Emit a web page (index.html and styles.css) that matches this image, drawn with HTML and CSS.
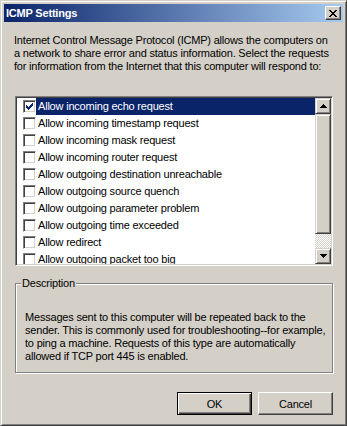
FILE: index.html
```html
<!DOCTYPE html>
<html>
<head>
<meta charset="utf-8">
<title>ICMP Settings</title>
<link rel="stylesheet" href="styles.css">
</head>
<body>
<div class="window">
  <div class="titlebar">
    <span class="title">ICMP Settings</span>
    <button class="close" aria-label="Close">
      <svg width="8" height="7" viewBox="0 0 8 7" shape-rendering="crispEdges">
        <path d="M0 0h2v1H0zM6 0h2v1H6zM1 1h2v1H1zM5 1h2v1H5zM2 2h4v1H2zM3 3h2v1H3zM2 4h4v1H2zM1 5h2v1H1zM5 5h2v1H5zM0 6h2v1H0zM6 6h2v1H6z" fill="#000"/>
      </svg>
    </button>
  </div>
  <div class="client">
    <p class="intro">Internet Control Message Protocol (ICMP) allows the computers on<br>a network to share error and status information. Select the requests<br>for information from the Internet that this computer will respond to:</p>
    <div class="listbox">
      <ul class="items">
        <li class="row selected"><span class="check checked"><svg width="7" height="7" viewBox="0 0 7 7" shape-rendering="crispEdges"><path d="M6 0h1v3H6zM5 1h1v3H5zM4 2h1v3H4zM3 3h1v3H3zM2 4h1v3H2zM1 3h1v3H1zM0 2h1v3H0z" fill="#0a246a"/></svg></span><span class="label">Allow incoming echo request</span></li>
        <li class="row"><span class="check"></span><span class="label">Allow incoming timestamp request</span></li>
        <li class="row"><span class="check"></span><span class="label">Allow incoming mask request</span></li>
        <li class="row"><span class="check"></span><span class="label">Allow incoming router request</span></li>
        <li class="row"><span class="check"></span><span class="label">Allow outgoing destination unreachable</span></li>
        <li class="row"><span class="check"></span><span class="label">Allow outgoing source quench</span></li>
        <li class="row"><span class="check"></span><span class="label">Allow outgoing parameter problem</span></li>
        <li class="row"><span class="check"></span><span class="label">Allow outgoing time exceeded</span></li>
        <li class="row"><span class="check"></span><span class="label">Allow redirect</span></li>
        <li class="row"><span class="check"></span><span class="label">Allow outgoing packet too big</span></li>
      </ul>
      <div class="scrollbar">
        <div class="sb-btn"><svg width="7" height="4" viewBox="0 0 7 4" shape-rendering="crispEdges"><path d="M3 0h1v1H3zM2 1h3v1H2zM1 2h5v1H1zM0 3h7v1H0z" fill="#000"/></svg></div>
        <div class="sb-thumb"></div>
        <div class="sb-track"></div>
        <div class="sb-btn"><svg width="7" height="4" viewBox="0 0 7 4" shape-rendering="crispEdges"><path d="M0 0h7v1H0zM1 1h5v1H1zM2 2h3v1H2zM3 3h1v1H3z" fill="#000"/></svg></div>
      </div>
    </div>
    <fieldset class="group">
      <legend class="group-label">Description</legend>
      <p class="desc">Messages sent to this computer will be repeated back to the<br>sender. This is commonly used for troubleshooting--for example,<br>to ping a machine. Requests of this type are automatically<br>allowed if TCP port 445 is enabled.</p>
    </fieldset>
    <div class="buttons">
      <button class="btn default">OK</button>
      <button class="btn">Cancel</button>
    </div>
  </div>
</div>
</body>
</html>
```
FILE: styles.css
```css
* { box-sizing: border-box; }

body {
  margin: 0;
  background: #d4d0c8;
  font: 11px "Liberation Sans", Arial, sans-serif;
  letter-spacing: -0.2px;
  color: #000;
}

.window {
  width: 347px;
  height: 426px;
  background: #d4d0c8;
  border: 1px solid;
  border-color: #d4d0c8 #404040 #404040 #d4d0c8;
  box-shadow: inset 1px 1px 0 #fff, inset -1px -1px 0 #808080;
  padding: 3px;
  display: flex;
  flex-direction: column;
}

.titlebar {
  height: 18px;
  flex: none;
  display: flex;
  align-items: center;
  justify-content: space-between;
  padding: 0 2px 0 2px;
  background: linear-gradient(to right, #0a246a, #a6caf0);
}

.title {
  color: #fff;
  font-weight: bold;
  font-size: 11px;
  line-height: 13px;
}

.close {
  width: 16px;
  height: 14px;
  padding: 0;
  margin: 0;
  display: flex;
  align-items: center;
  justify-content: center;
  background: #d4d0c8;
  border: 1px solid;
  border-color: #fff #404040 #404040 #fff;
  box-shadow: inset -1px -1px 0 #808080;
}

.client {
  flex: 1;
  display: flex;
  flex-direction: column;
  padding: 12px 10px 5px 10px;
}

.intro {
  margin: 0;
  line-height: 13px;
  white-space: nowrap;
}

.listbox {
  margin: 23px 0 0 1px;
  height: 170px;
  flex: none;
  display: flex;
  background: #fff;
  border: 1px solid;
  border-color: #808080 #fff #fff #808080;
  box-shadow: inset 1px 1px 0 #404040, inset -1px -1px 0 #d4d0c8;
  padding: 1px;
}

.items {
  list-style: none;
  margin: 0;
  padding: 0;
  flex: 1;
  overflow: hidden;
}

.row {
  height: 17px;
  display: flex;
  align-items: center;
}

.check {
  width: 13px;
  height: 13px;
  margin-left: 6px;
  flex: none;
  background: #fff;
  border: 1px solid;
  border-color: #808080 #fff #fff #808080;
  box-shadow: inset 1px 1px 0 #404040, inset -1px -1px 0 #d4d0c8;
  display: flex;
  align-items: center;
  justify-content: center;
}

.label {
  flex: 1;
  height: 17px;
  line-height: 17px;
  padding-left: 2px;
  white-space: nowrap;
}

.selected .label {
  background: #0a246a;
  color: #fff;
}

.scrollbar {
  width: 16px;
  flex: none;
  display: flex;
  flex-direction: column;
}

.sb-btn {
  height: 16px;
  flex: none;
  display: flex;
  align-items: center;
  justify-content: center;
  background: #d4d0c8;
  border: 1px solid;
  border-color: #d4d0c8 #404040 #404040 #d4d0c8;
  box-shadow: inset 1px 1px 0 #fff, inset -1px -1px 0 #808080;
}

.sb-thumb {
  height: 120px;
  flex: none;
  background: #d4d0c8;
  border: 1px solid;
  border-color: #d4d0c8 #404040 #404040 #d4d0c8;
  box-shadow: inset 1px 1px 0 #fff, inset -1px -1px 0 #808080;
}

.sb-track {
  flex: 1;
  background: repeating-conic-gradient(#fff 0 25%, #d4d0c8 0 50%) 0 0 / 2px 2px;
}

.group {
  margin: 11px 0 0 1px;
  padding: 0;
  min-width: 0;
  border: 1px solid #808080;
  box-shadow: 1px 1px 0 #fff, inset 1px 1px 0 #fff;
}

.group-label {
  margin-left: 5px;
  padding: 0 1px;
  line-height: 13px;
  background: #d4d0c8;
}

.desc {
  margin: 21px 0 0 0;
  padding: 0 10px 9px 9px;
  line-height: 13px;
  white-space: nowrap;
}

.buttons {
  margin-top: 19px;
  display: flex;
  justify-content: flex-end;
  gap: 6px;
}

.btn {
  width: 75px;
  height: 23px;
  padding: 0;
  font: 11px "Liberation Sans", Arial, sans-serif;
  letter-spacing: -0.2px;
  color: #000;
  background: #d4d0c8;
  border: 1px solid;
  border-color: #fff #404040 #404040 #fff;
  box-shadow: inset -1px -1px 0 #808080;
}

.btn.default {
  border: 1px solid #000;
  box-shadow: inset 1px 1px 0 #fff, inset -1px -1px 0 #404040, inset -2px -2px 0 #808080;
}
```
